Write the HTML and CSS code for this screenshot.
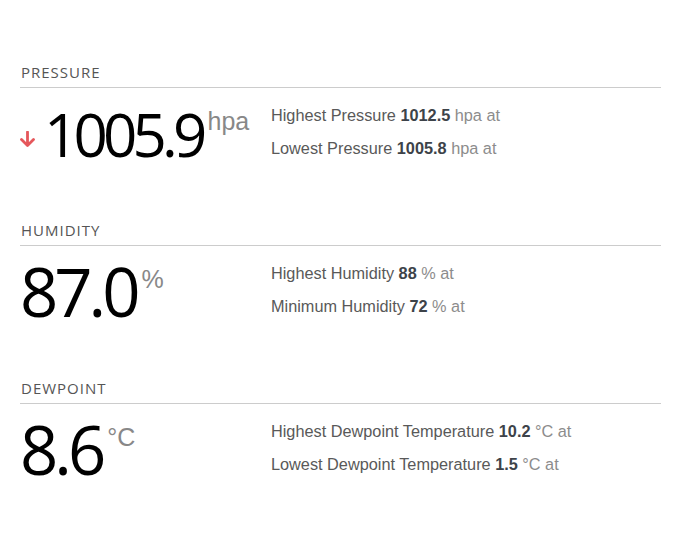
FILE: index.html
```html
<!DOCTYPE html>
<html lang="en">
<head>
<meta charset="utf-8">
<title>Weather details</title>
<link rel="stylesheet" href="styles.css">
</head>
<body>
<main class="page">
  <section class="stat">
    <h2 class="stat-title">PRESSURE</h2>
    <div class="stat-body">
      <div class="value">
        <svg class="trend" width="15" height="16" viewBox="0 0 15 16" aria-hidden="true">
          <path d="M7.5 1 V14.5 M1.5 8.5 L7.5 14.5 L13.5 8.5" fill="none" stroke="#e5575b" stroke-width="2.8" stroke-linecap="round" stroke-linejoin="round"/>
        </svg>
        <span class="number number-small">1005.9</span>
        <span class="unit">hpa</span>
      </div>
      <ul class="extremes">
        <li>Highest Pressure <b>1012.5</b> <span class="muted">hpa at</span></li>
        <li>Lowest Pressure <b>1005.8</b> <span class="muted">hpa at</span></li>
      </ul>
    </div>
  </section>

  <section class="stat">
    <h2 class="stat-title">HUMIDITY</h2>
    <div class="stat-body">
      <div class="value">
        <span class="number">87.0</span>
        <span class="unit">%</span>
      </div>
      <ul class="extremes">
        <li>Highest Humidity <b>88</b> <span class="muted">% at</span></li>
        <li>Minimum Humidity <b>72</b> <span class="muted">% at</span></li>
      </ul>
    </div>
  </section>

  <section class="stat">
    <h2 class="stat-title">DEWPOINT</h2>
    <div class="stat-body">
      <div class="value">
        <span class="number">8.6</span>
        <span class="unit">°C</span>
      </div>
      <ul class="extremes">
        <li>Highest Dewpoint Temperature <b>10.2</b> <span class="muted">°C at</span></li>
        <li>Lowest Dewpoint Temperature <b>1.5</b> <span class="muted">°C at</span></li>
      </ul>
    </div>
  </section>
</main>
</body>
</html>
```

FILE: styles.css
```css
html, body {
  margin: 0;
  padding: 0;
  background: #ffffff;
}

.page {
  padding: 62px 24px 0 20px;
  font-family: "Liberation Sans", Arial, sans-serif;
}

.stat {
  margin-bottom: 55px;
}

.stat-title {
  margin: 0;
  font-family: "Open Sans", "Noto Sans", sans-serif;
  font-weight: 400;
  font-size: 15px;
  letter-spacing: 1px;
  line-height: 20px;
  color: #555555;
  padding: 0 0 5px 1px;
  border-bottom: 1px solid #cccccc;
}

.stat-body {
  display: grid;
  grid-template-columns: 251px 1fr;
  align-items: start;
}

.value {
  display: flex;
  align-items: flex-start;
  padding-top: 15px;
}

.trend {
  margin-top: 28px;
  margin-right: 9px;
  flex: none;
}

.number {
  font-family: "Open Sans", "Noto Sans", sans-serif;
  font-weight: 400;
  font-size: 67px;
  line-height: 60px;
  letter-spacing: -4px;
  color: #000000;
}

.number-small {
  font-size: 60px;
  line-height: 62px;
  letter-spacing: -4.8px;
}

.unit {
  font-family: "Liberation Sans", Arial, sans-serif;
  font-size: 25px;
  line-height: 36px;
  color: #888888;
  margin-left: 5px;
}

.extremes {
  list-style: none;
  margin: 11px 0 0;
  padding: 0;
  font-size: 16.3px;
  line-height: 33px;
  color: #595959;
}

.extremes b {
  color: #3d4349;
  font-weight: 700;
}

.muted {
  color: #8c8c8c;
}
```
